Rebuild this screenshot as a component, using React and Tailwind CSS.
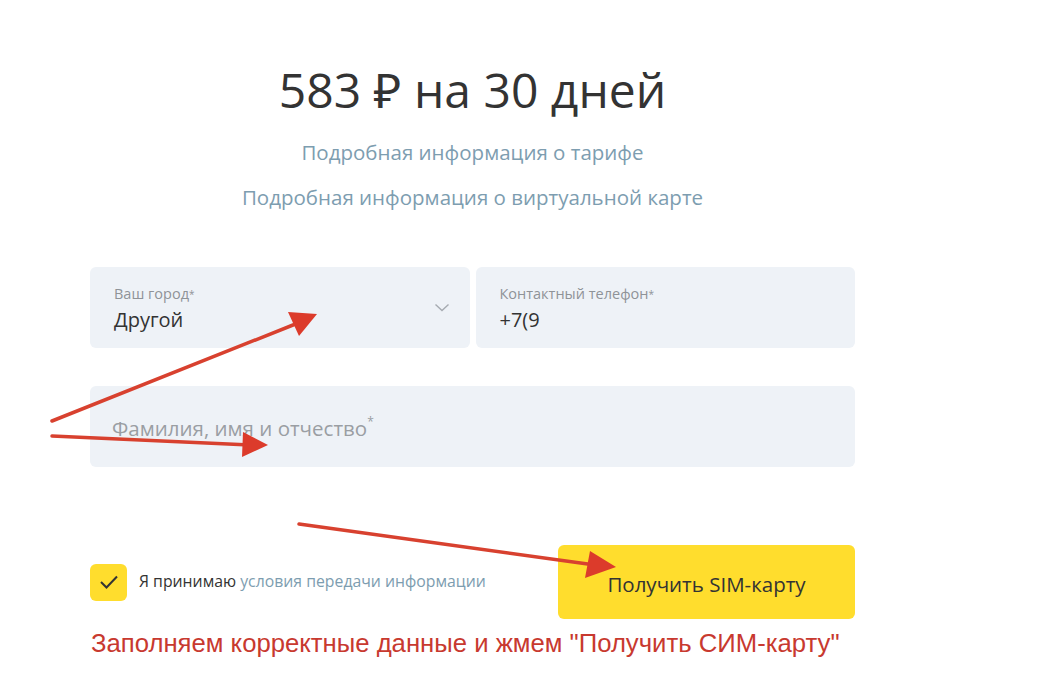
const Field = ({ label, value, chevron }) => (
  <div className="relative flex-1 h-[81px] rounded-md bg-[#eef2f7] px-6 pt-[18px]">
    <div className="text-[14.5px] leading-[18px] text-[#8f9398]">
      {label}
      <span className="text-[10px] align-top">*</span>
    </div>
    <div className="mt-[4px] text-[20px] leading-[26px] text-[#333333]">{value}</div>
    {chevron && (
      <svg className="absolute right-[20px] top-[36px]" width="16" height="10" viewBox="0 0 16 10" fill="none">
        <path d="M1.5 1.5 L8 7.5 L14.5 1.5" stroke="#a6abb1" strokeWidth="1.4" />
      </svg>
    )}
  </div>
);

const Arrows = () => (
  <svg className="absolute inset-0 pointer-events-none" width="1040" height="678" viewBox="0 0 1040 678">
    <g stroke="#d8412f" strokeWidth="3.5" strokeLinecap="round" fill="none">
      <line x1="52" y1="421" x2="298" y2="323" />
      <line x1="52" y1="436" x2="250" y2="445" />
      <line x1="299" y1="524" x2="595" y2="565" />
    </g>
    <g fill="#dc3b2b">
      <polygon points="317,314 288,312 299,336" />
      <polygon points="268,445 243,432 242,457" />
      <polygon points="616,567 590,551 585,578" />
    </g>
  </svg>
);

export default function App() {
  return (
    <div className="relative w-[1040px] h-[678px] overflow-hidden bg-white" style={{ fontFamily: "'Open Sans', 'Noto Sans', sans-serif" }}>
      <div className="ml-[90px] w-[765px] pt-[62px] flex flex-col">
        <h1 className="text-center text-[48px] leading-[56px] text-[#333333]">583 ₽ на 30 дней</h1>
        <div className="mt-[21px] text-center text-[20.5px] leading-[26px] text-[#7d9db0]">Подробная информация о тарифе</div>
        <div className="mt-[19px] text-center text-[20.5px] leading-[26px] text-[#7d9db0]">Подробная информация о виртуальной карте</div>

        <div className="mt-[57px] flex gap-[6px]">
          <Field label="Ваш город" value="Другой" chevron />
          <Field label="Контактный телефон" value="+7(9" />
        </div>

        <div className="mt-[38px] h-[81px] rounded-md bg-[#eef2f7] px-[22px] flex items-center">
          <span className="text-[20.5px] text-[#9a9ea3] pt-[4px]">
            Фамилия, имя и отчество<span className="text-[12px] align-top">*</span>
          </span>
        </div>

        <div className="mt-[78px] flex items-center justify-between">
          <div className="flex items-center gap-3">
            <div className="w-[37px] h-[37px] rounded-md bg-[#ffdd2d] flex items-center justify-center">
              <svg width="20" height="16" viewBox="0 0 20 16" fill="none">
                <path d="M2 8 L7.5 13.5 L18 2.5" stroke="#333333" strokeWidth="2" />
              </svg>
            </div>
            <div className="text-[15.8px] text-[#333333]">
              Я принимаю <span className="text-[#7d9db0]">условия передачи информации</span>
            </div>
          </div>
          <button className="w-[297px] h-[74px] rounded-md bg-[#ffdd2d] text-[20.5px] text-[#333333] pt-[4px]">
            Получить SIM-карту
          </button>
        </div>
      </div>
      <div className="ml-[91px] mt-[8px] text-[25.7px] leading-[32px] text-[#c8392f]" style={{ fontFamily: "'Liberation Sans', Arial, sans-serif" }}>
        Заполняем корректные данные и жмем "Получить СИМ-карту"
      </div>
      <Arrows />
    </div>
  );
}
